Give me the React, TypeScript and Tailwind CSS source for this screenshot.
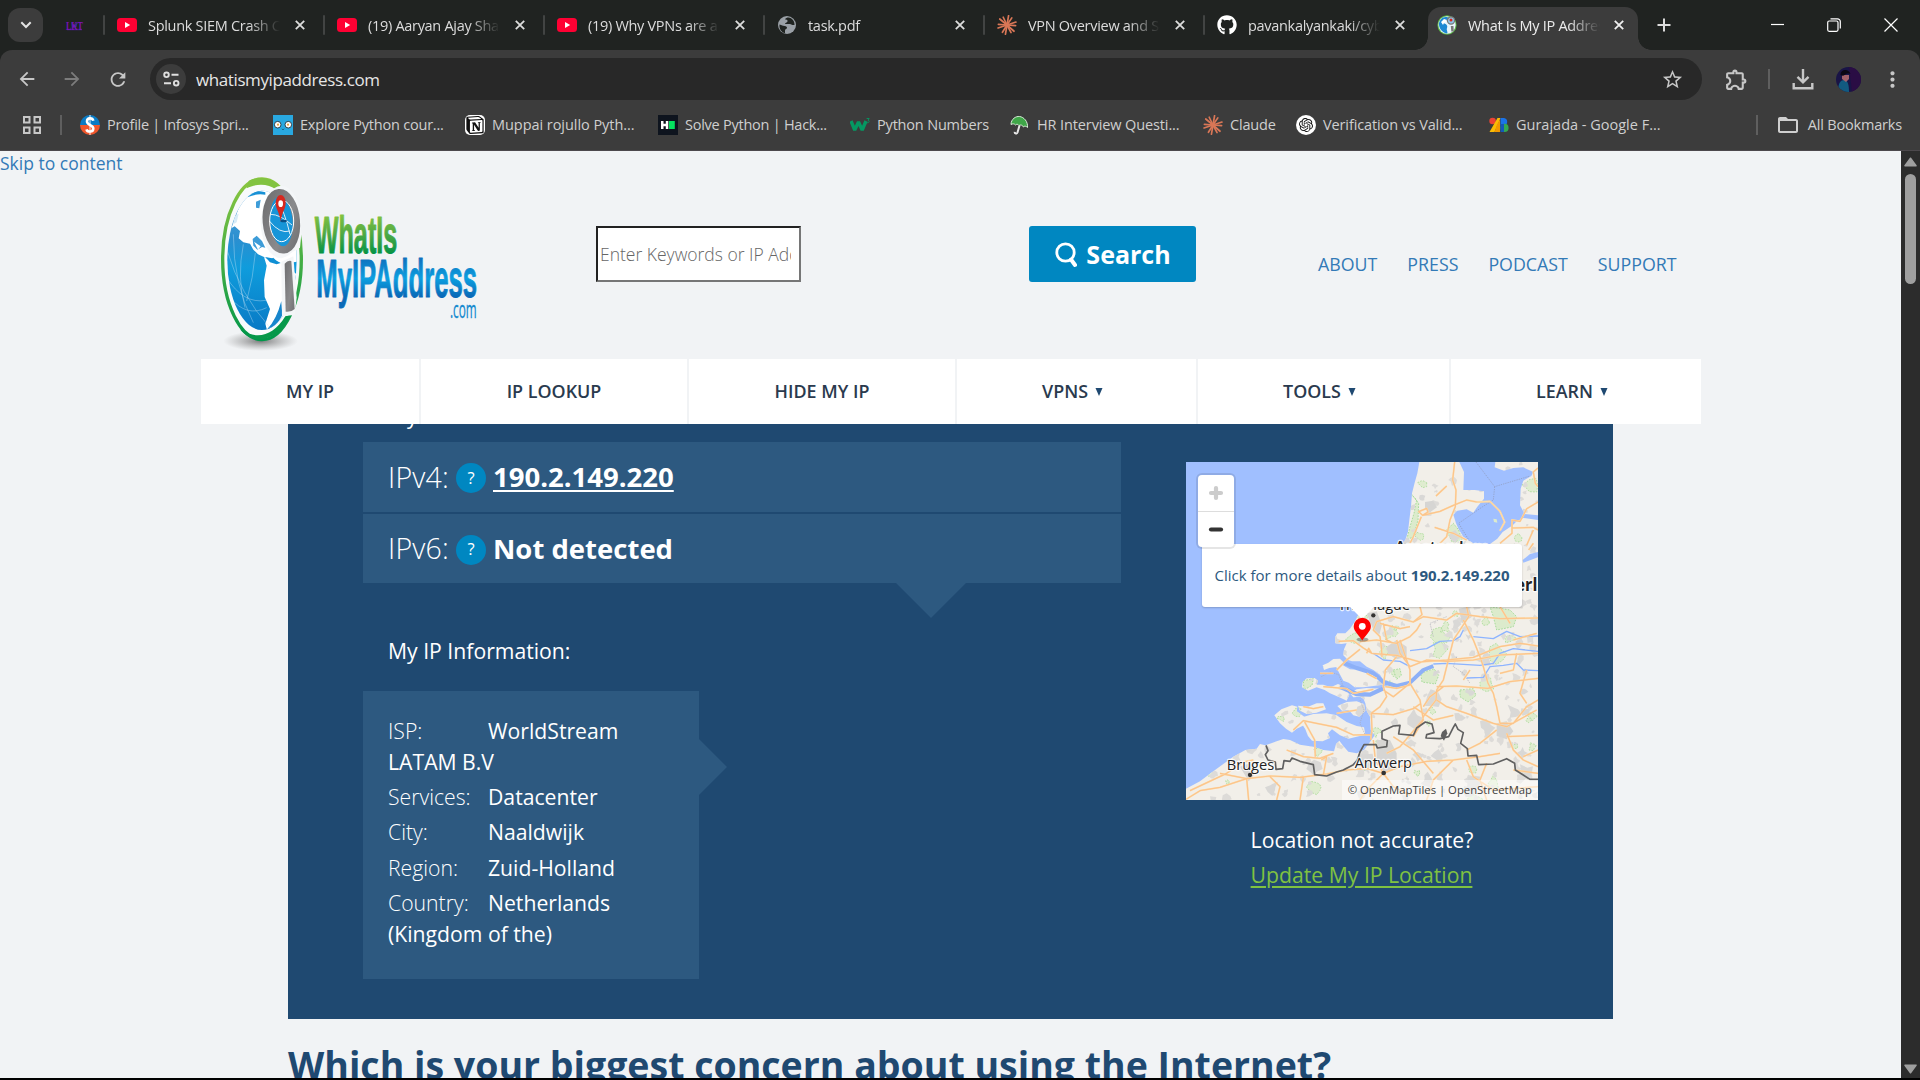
import React from "react";
import { FaGithub } from "react-icons/fa";
import { MdArrowBack, MdArrowForward, MdRefresh, MdStarBorder, MdOutlineExtension, MdFolderOpen, MdMoreVert } from "react-icons/md";
import { SiNotion, SiOpenai } from "react-icons/si";

/* ---------- favicons ---------- */

function YouTube() {
  return (
    <svg width="20" height="20" viewBox="0 0 20 20">
      <rect x="0" y="3" width="20" height="14" rx="3.5" fill="#ff0033" />
      <path d="M8 7l5.2 3L8 13z" fill="#fff" />
    </svg>
  );
}

function Spark() {
  const rays = [0, 30, 58, 88, 118, 150, 180, 208, 240, 268, 300, 330];
  return (
    <svg width="20" height="20" viewBox="-10 -10 20 20">
      {rays.map((r, i) => (
        <path key={r} d={i % 2 ? "M0 0L9.4 0.6" : "M0 0L8.6 -0.6"} stroke="#d97757" strokeWidth="1.7" strokeLinecap="round" transform={`rotate(${r + 8})`} />
      ))}
    </svg>
  );
}

function PlainGlobe() {
  return (
    <svg width="20" height="20" viewBox="0 0 20 20">
      <circle cx="10" cy="10" r="9" fill="#9aa0a6" />
      <path d="M2.5 9.5c2.500 .5 3 1.500 5 1.500s2.500 1 2.500 2-2 1-2 2.500v2.800C4.500 17.500 2 14 2.500 9.500zM8 4.500c1.500 0 3 .5 2.500 2S8 7.500 8 9h5c1 0 1.500 1 2.500 1h2c.3-4-2.500-7-6-7.500-1.500 0-3 .5-3.500 2z" fill="#202421" />
    </svg>
  );
}

function SiteGlobe() {
  return (
    <svg width="20" height="20" viewBox="0 0 20 20">
      <ellipse cx="10" cy="10" rx="9.6" ry="9.800" fill="#5cb646" />
      <ellipse cx="10" cy="10" rx="8.6" ry="8.800" fill="#e8f4fb" />
      <path d="M2 8c1-3 2-4 4-5.500C8 1.500 11 2 12 3l-1 3-3-.5-3 2c2 1 4 1 5 3 1 2-1 3 0 5 0 1 1 2 0 3C5 17.500 1.500 13 2 8z" fill="#1e88d2" />
      <path d="M4 7l3-3 3 1-1 2-2 1-1 2z" fill="#fff" />
      <circle cx="14" cy="5.500" r="3.600" fill="#8cc4ea" stroke="#777" strokeWidth="1.200" />
      <circle cx="14" cy="5" r="1.500" fill="#d9291c" />
      <path d="M13.800 11h2.600l.4 5.500h-2.500z" fill="#777" />
    </svg>
  );
}

function Infosys() {
  return (
    <svg width="20" height="20" viewBox="0 0 20 20">
      <path d="M0 10a10 10 0 0 1 20 0z" fill="#0a7bc4" />
      <path d="M0 10a10 10 0 0 0 20 0z" fill="#f0562b" />
      <path d="M13.300 5.800C12.500 2.500 7 2.500 7 6.500c0 4 6.300 3.200 6.300 7 0 4-6 3.800-6.800.8" fill="none" stroke="#fff" strokeWidth="2.600" />
      <path d="M10 0v20" stroke="#fff" strokeWidth=".9" />
    </svg>
  );
}

function Owl() {
  return (
    <svg width="20" height="20" viewBox="0 0 20 20">
      <rect width="20" height="20" fill="#29a8e0" />
      <circle cx="4.700" cy="9.700" r="3.300" fill="#fff" stroke="#23313b" strokeWidth=".9" />
      <circle cx="15.300" cy="9.700" r="3.300" fill="#fff" stroke="#23313b" strokeWidth=".9" />
      <circle cx="5" cy="9.700" r="1.100" fill="#e8a33d" />
      <circle cx="15" cy="9.700" r="1.100" fill="#e8a33d" />
      <path d="M9 13.800l1 1 1-1" stroke="#1c4c66" fill="none" />
    </svg>
  );
}

function Hacker() {
  return (
    <svg width="20" height="20" viewBox="0 0 20 20">
      <rect width="20" height="20" fill="#0e141e" />
      <path d="M3 6h2.500v2.700h2.300V6h2.500v8H7.800v-2.800H5.500V14H3z" fill="#fff" />
      <rect x="11" y="6" width="5.800" height="8" fill="#05e25f" />
    </svg>
  );
}

function W3() {
  return (
    <svg width="20" height="20" viewBox="0 0 20 20">
      <path d="M1 6l3.700 9L8.500 7l3.700 8L16 6" fill="none" stroke="#059862" strokeWidth="3.400" strokeLinejoin="bevel" />
      <path d="M16.600 3.500h2.600l-1.200 1.800c2 .2 1.500 3-1.600 2.300" fill="none" stroke="#059862" strokeWidth=".9" />
    </svg>
  );
}

function Umbrella() {
  return (
    <svg width="20" height="20" viewBox="0 0 20 20">
      <path d="M1 9.500C1 4 6 1 9.500 1.500c4.500.6 8.500 5 8 11-1.500-1.500-3-1.800-4-.5-1-2-3-2.500-4.500-1.500-1-1.500-2.500-1.500-3.500-.5-1-1.300-3-1.500-4.500-.5z" fill="#3fa648" stroke="#d9eed9" strokeWidth="1" />
      <path d="M9.500 10.500L7.500 17.500c-.6 1.600-3 1.200-2.800-.6" stroke="#e6e6e6" strokeWidth="2" fill="none" />
    </svg>
  );
}

function Translit() {
  return (
    <svg width="20" height="20" viewBox="0 0 20 20">
      <circle cx="3.600" cy="6" r="3.300" fill="#ea4335" />
      <path d="M8.500 3h3L5.500 17H.5z" fill="#fbbc04" />
      <path d="M8 9.500l3-5V17H5.500z" fill="#f29900" />
      <path d="M11.500 3h3.500a3.800 3.800 0 0 1 0 7.500h-3.500z" fill="#1a73e8" />
      <circle cx="15.500" cy="12.900" r="4.100" fill="#34a853" />
      <path d="M11.500 9h3.500v8h-3.500z" fill="#1558b8" />
    </svg>
  );
}

function Notion() {
  return (
    <span className="flex h-5 w-5 items-center justify-center rounded-[5px] bg-white">
      <SiNotion size={18} color="#111" />
    </span>
  );
}

function ChatGpt() {
  return (
    <span className="flex h-5 w-5 items-center justify-center rounded-full bg-white">
      <SiOpenai size={14} color="#111" />
    </span>
  );
}

function Close({ color = "#dcdcdc" }: { color?: string }) {
  return (
    <svg width="10" height="10" viewBox="0 0 10 10" className="shrink-0">
      <path d="M.8.8l8.400 8.400M9.200.8L.8 9.200" stroke={color} strokeWidth="1.800" />
    </svg>
  );
}

/* ---------- browser frame ---------- */

const tabs = [
  { icon: <YouTube />, title: "Splunk SIEM Crash Course" },
  { icon: <YouTube />, title: "(19) Aaryan Ajay Sharma" },
  { icon: <YouTube />, title: "(19) Why VPNs are a waste" },
  { icon: <PlainGlobe />, title: "task.pdf" },
  { icon: <Spark />, title: "VPN Overview and Sec" },
  { icon: <FaGithub size={20} color="#fff" />, title: "pavankalyankaki/cyber" },
];

function TabStrip() {
  return (
    <div className="flex h-[50px] shrink-0 items-end bg-[#202321]">
      <div className="mb-2 ml-2 flex h-[34px] w-[35px] items-center justify-center rounded-xl bg-[#3c3c3c]">
        <svg width="12" height="8" viewBox="0 0 12 8"><path d="M1.300 1.300L6 6l4.700-4.700" fill="none" stroke="#e3e3e3" strokeWidth="2" /></svg>
      </div>
      <svg width="17" height="14" viewBox="0 0 17 14" className="mb-[18px] ml-[23px] overflow-visible" fontFamily="'Liberation Serif', serif" fontWeight="700">
        <path d="M1 11.500h15" stroke="#3c1f80" strokeWidth="1.500" />
        <path d="M5 4l3.500 3 3-3-1 5-4.500 1z" fill="#27358f" />
        <text x="0" y="12" fontSize="13" fill="#7a12b8" textLength="17" lengthAdjust="spacingAndGlyphs">LKT</text>
      </svg>
      <div className="ml-[20px] flex h-[50px]">
        {tabs.map((t, i) => (
          <div key={i} className="flex h-[50px] w-[220px] items-center">
            <div className="h-5 w-[2px] rounded bg-[#424443]" />
            <div className="ml-[12px] flex w-5 justify-center">{t.icon}</div>
            <div className="ml-[11px] w-[132px] overflow-hidden whitespace-nowrap pt-[1px] text-[14.500px] text-[#dcdcdc] [mask-image:linear-gradient(to_right,black_76%,transparent)]"><span className="tracking-[-0.300px]">{t.title}</span></div>
            <div className="ml-[15px]"><Close /></div>
          </div>
        ))}
      </div>
      <div className="relative ml-[5px] flex h-[43px] w-[210px] items-center rounded-t-[13px] bg-[#3c3c3c]">
        <div className="absolute bottom-0 -left-[13px] h-[13px] w-[13px] bg-[radial-gradient(circle_at_0_0,#202321_12.500px,#3c3c3c_13px)]" />
        <div className="absolute -right-[13px] bottom-0 h-[13px] w-[13px] bg-[radial-gradient(circle_at_100%_0,#202321_12.500px,#3c3c3c_13px)]" />
        <div className="mb-[7px] ml-[9px] w-5"><SiteGlobe /></div>
        <div className="mb-[6px] ml-[11px] w-[132px] overflow-hidden whitespace-nowrap text-[14.500px] tracking-[-0.300px] text-[#ececec] [mask-image:linear-gradient(to_right,black_76%,transparent)]">What Is My IP Address</div>
        <div className="mb-[7px] ml-[14px]"><Close color="#f0f0f0" /></div>
      </div>
      <div className="ml-[19px] flex h-[50px] items-center">
        <svg width="14" height="14" viewBox="0 0 14 14"><path d="M7 .5v13M.5 7h13" stroke="#dcdcdc" strokeWidth="2" /></svg>
      </div>
      <div className="ml-auto mr-[22px] flex h-[50px] items-center gap-[43px] text-white">
        <svg width="13" height="13" viewBox="0 0 13 13"><path d="M0 5.500h13" stroke="#fff" strokeWidth="1.200" /></svg>
        <svg width="14" height="14" viewBox="0 0 14 14" fill="none" stroke="#fff" strokeWidth="1.200"><rect x=".7" y="3" width="10.300" height="10.300" rx="1.500" /><path d="M3.500.8h7a2.800 2.800 0 0 1 2.800 2.800v7" /></svg>
        <svg width="14" height="14" viewBox="0 0 14 14"><path d="M.5.5l13 13M13.500.5l-13 13" stroke="#fff" strokeWidth="1.200" /></svg>
      </div>
    </div>
  );
}

function Toolbar() {
  return (
    <div className="flex h-[58px] shrink-0 items-center rounded-t-xl bg-[#3c3c3c] text-[#c7c7c7]">
      <div className="ml-[16px] flex w-[22px] justify-center"><MdArrowBack size={22} /></div>
      <div className="ml-[23px] flex w-[22px] justify-center text-[#7c7c7c]"><MdArrowForward size={22} /></div>
      <div className="ml-[24px] flex w-[22px] justify-center"><MdRefresh size={23} /></div>
      <div className="ml-[21px] flex h-[42px] w-[1552px] items-center rounded-full bg-[#282828]">
        <div className="ml-[6px] flex h-[30px] w-[30px] items-center justify-center rounded-full bg-[#3c3c3c]">
          <svg width="17" height="16" viewBox="0 0 17 16" fill="none" stroke="#dedede" strokeWidth="1.900"><circle cx="3.500" cy="3.800" r="2.300" /><path d="M8.500 3.800h7M1 12.200h7" /><circle cx="13.200" cy="12.200" r="2.300" /></svg>
        </div>
        <div className="ml-[10px] pt-[1px] text-[17px] tracking-[-0.400px] text-[#e6e6e6]">whatismyipaddress.com</div>
        <MdStarBorder size={23} className="ml-auto mr-[18px]" />
      </div>
      <MdOutlineExtension size={25} className="ml-[22px]" />
      <div className="ml-[19px] h-5 w-[2px] bg-[#5f5f5f]" />
      <svg width="22" height="22" viewBox="0 0 22 22" fill="none" stroke="#c7c7c7" strokeWidth="2.400" className="ml-[22px]">
        <path d="M11 1v13M5.500 8.800l5.500 5.500 5.500-5.500M1.700 15v5.200h18.600V15" />
      </svg>
      <svg width="25" height="25" viewBox="0 0 25 25" className="ml-[22px] rounded-full">
        <rect width="25" height="25" fill="#191446" />
        <path d="M13 0h12v25h-9z" fill="#2a0d44" />
        <path d="M2 25c0-8 2-12 6-12s5 5 5 12z" fill="#125a80" />
        <path d="M6 8h7v4l-3 3-4-3z" fill="#a2606a" />
        <path d="M4.500 8c0-6 8-7 10-1-3-1-5 0-6 1s-2 1-4 0z" fill="#0b0714" />
      </svg>
      <MdMoreVert size={25} className="ml-[19px]" />
    </div>
  );
}

const bookmarks = [
  { w: "w-[193px] tracking-[-0.280px]", icon: <Infosys />, label: "Profile | Infosys Spri..." },
  { w: "w-[192px] tracking-[-0.200px]", icon: <Owl />, label: "Explore Python cour..." },
  { w: "w-[193px] tracking-[-0.050px]", icon: <Notion />, label: "Muppai rojullo Pyth..." },
  { w: "w-[192px] tracking-[-0.250px]", icon: <Hacker />, label: "Solve Python | Hack..." },
  { w: "w-[160px] tracking-[-0.180px]", icon: <W3 />, label: "Python Numbers" },
  { w: "w-[193px] tracking-[-0.120px]", icon: <Umbrella />, label: "HR Interview Questi..." },
  { w: "w-[93px] tracking-[-0.180px]", icon: <Spark />, label: "Claude" },
  { w: "w-[193px] tracking-[-0.120px]", icon: <ChatGpt />, label: "Verification vs Valid..." },
  { w: "w-[190px] tracking-[0px]", icon: <Translit />, label: "Gurajada - Google F..." },
];

function Bookmarks() {
  return (
    <div className="flex h-[43px] shrink-0 items-center border-b border-[#4c484c] bg-[#3c3c3c] pb-[9px] text-[14.500px] text-[#cfcfcf]">
      <svg width="18" height="18" viewBox="0 0 18 18" fill="none" stroke="#c7c7c7" strokeWidth="2" className="ml-[23px]">
        <rect x="1" y="1" width="5.500" height="5.500" /><rect x="11.500" y="1" width="5.500" height="5.500" /><rect x="1" y="11.500" width="5.500" height="5.500" /><rect x="11.500" y="11.500" width="5.500" height="5.500" />
      </svg>
      <div className="ml-[19px] mr-[18px] h-5 w-[2px] bg-[#5f5f5f]" />
      {bookmarks.map((b) => (
        <div key={b.label} className={`flex shrink-0 items-center gap-[7px] whitespace-nowrap ${b.w}`}>
          <span className="w-5 shrink-0">{b.icon}</span>
          <span>{b.label}</span>
        </div>
      ))}
      <div className="ml-auto h-5 w-[2px] bg-[#5f5f5f]" />
      <MdFolderOpen size={24} className="ml-[18px]" />
      <span className="ml-[8px] mr-[18px] whitespace-nowrap tracking-[-0.180px]">All Bookmarks</span>
    </div>
  );
}

/* ---------- site header ---------- */

function Logo() {
  return (
    <svg width="262" height="180" viewBox="84 72 786 540" className="shrink-0">
      <defs>
        <linearGradient id="lg-green" x1="0" y1="0" x2="0" y2="1"><stop offset="0.150" stopColor="#86c440" /><stop offset=".5" stopColor="#4fa944" /><stop offset="0.850" stopColor="#009245" /></linearGradient>
        <linearGradient id="lg-ring" x1="0" y1="0" x2="0" y2="1"><stop offset="0" stopColor="#8cc63f" /><stop offset="1" stopColor="#00974a" /></linearGradient>
        <linearGradient id="lg-blue" x1="0" y1="0" x2="0" y2="1"><stop offset="0.150" stopColor="#0f70bd" /><stop offset=".5" stopColor="#0c9fe0" /><stop offset="0.800" stopColor="#0a6ab8" /></linearGradient>
        <linearGradient id="lg-sea" x1="0" y1="0" x2="0" y2="1"><stop offset="0" stopColor="#5aa6da" /><stop offset=".35" stopColor="#2a8fd0" /><stop offset=".55" stopColor="#0f9cdc" /><stop offset="1" stopColor="#0878c4" /></linearGradient>
        <linearGradient id="lg-grey" x1="0" y1="0" x2="1" y2="1"><stop offset="0" stopColor="#6e6e70" /><stop offset=".6" stopColor="#8a8a8c" /><stop offset="1" stopColor="#707072" /></linearGradient>
        <radialGradient id="lg-shadow"><stop offset="0" stopColor="#555" stopOpacity=".75" /><stop offset="1" stopColor="#888" stopOpacity="0" /></radialGradient>
        <clipPath id="lg-globe"><ellipse cx="216" cy="328" rx="104" ry="209" /></clipPath>
      </defs>
      <ellipse cx="212" cy="570" rx="112" ry="30" fill="url(#lg-shadow)" />
      <ellipse cx="216" cy="325" rx="118" ry="241" fill="#f8fafb" stroke="url(#lg-ring)" strokeWidth="10" />
      <path d="M176 90C200 76 240 76 268 104L258 116C236 98 200 96 170 112z" fill="#82c341" />
      <path d="M150 535C190 585 260 575 306 490L286 496C250 556 200 568 150 535z" fill="#06984a" />
      <g clipPath="url(#lg-globe)">
        <rect x="105" y="115" width="230" height="430" fill="url(#lg-sea)" />
        <path d="M124 232L136 200 150 160 180 130 240 112 330 150 340 330 276 338 262 332 250 320 238 326 222 318 204 310 190 296 180 278 160 274 146 262 150 240 134 226z" fill="#fff" />
        <path d="M172 132Q196 114 226 124L226 131Q198 127 174 138z" fill="#1791d6" />
        <path d="M198 152l14-6-4 26-10-2zM188 264l12-10 16 16 10 20-10-2-14 8-12-12z" fill="#3d9cd8" />
        <path d="M132 196l14-8-6 26-10 6z" fill="#d7ebf7" />
        <path d="M192 272l20 14-8 10z" fill="#fff" />
        <path d="M222 318l20 12 34 6 20 16 40 30v160H232l-6-24 14-44-16-36-2-50 8-44z" fill="#fff" />
        <path d="M226 318l20 4 26 14-12 4-20-6z" fill="#0f8fd4" />
        <path d="M232 534Q260 505 274 450L277 492Q262 525 232 542z" fill="#1786cc" />
        <g fill="none" stroke="#cfe8f7" strokeWidth="1.600" opacity=".7">
          <path d="M112 300Q150 430 240 530M130 250Q130 400 190 515M160 280Q140 380 165 470M196 306Q190 380 170 450M110 380Q160 460 228 448M120 440Q170 500 230 470" />
        </g>
      </g>
      <path d="M212 200A62 112 0 0 0 276 322L330 290 334 250 330 200z" fill="#f6f8f9" />
      <ellipse cx="274" cy="212" rx="60" ry="108" fill="#f4f6f8" />
      <ellipse cx="274" cy="211" rx="45" ry="86" fill="#1795d8" stroke="url(#lg-grey)" strokeWidth="22" transform="rotate(-5 274 211)" />
      <path d="M242 190Q270 190 306 222M262 150Q284 180 300 250M238 210Q270 250 300 240" fill="none" stroke="#d8eefa" strokeWidth="3" />
      <ellipse cx="275" cy="210" rx="36" ry="62" fill="none" stroke="#fff" strokeWidth="3" />
      <ellipse cx="281" cy="210" rx="10" ry="4" fill="#0a4f86" />
      <path d="M272 212C268 180 257 175 257 156A15 24 0 0 1 287 156C287 175 276 180 272 212z" fill="#d7281f" />
      <ellipse cx="272" cy="158" rx="7" ry="10" fill="#fff" />
      <path d="M274 332L310 316 320 440 314 492 276 496z" fill="#f4f6f8" />
      <path d="M284 338Q294 326 304 330L314 474Q304 484 287 482z" fill="url(#lg-grey)" />
      <g fontFamily="'Liberation Sans', Arial, sans-serif" fontWeight="700" strokeLinejoin="round">
        <text x="374" y="305" fontSize="158" textLength="248" lengthAdjust="spacingAndGlyphs" fill="url(#lg-green)" stroke="url(#lg-green)" strokeWidth="3">WhatIs</text>
        <text x="379" y="438" fontSize="160" textLength="482" lengthAdjust="spacingAndGlyphs" fill="url(#lg-blue)" stroke="url(#lg-blue)" strokeWidth="3">MyIPAddress</text>
      </g>
      <text x="780" y="500" fontSize="72" fontFamily="'Open Sans', sans-serif" fontWeight="500" textLength="80" lengthAdjust="spacingAndGlyphs" fill="#1389cf" stroke="#1389cf" strokeWidth="1">.com</text>
    </svg>
  );
}

function SiteHeader() {
  return (
    <div className="flex h-[186px] shrink-0 items-start pl-[218px] pt-0.5">
      <Logo />
      <div className="ml-[116px] mt-[51px] flex h-[56px] w-[205px] items-center overflow-hidden border-2 border-b-[#767676] border-l-[#222] border-r-[#767676] border-t-[#222] bg-white pl-[2px]">
        <span className="block w-[191px] overflow-hidden whitespace-nowrap text-[17.500px] font-light text-[#666]">Enter Keywords or IP Address</span>
      </div>
      <button className="ml-[228px] mt-[51px] flex h-[56px] w-[167px] items-center justify-center gap-[9px] rounded-[3px] bg-[#0087c1] pl-[1px] pt-[1px] text-[25px] font-bold text-white">
        <svg width="22" height="26" viewBox="0 0 22 26" fill="none" stroke="#fff" strokeLinecap="round"><circle cx="10.500" cy="10.500" r="8.700" strokeWidth="2.800" /><path d="M16 17.500l4 5.500" strokeWidth="4" /></svg>
        Search
      </button>
      <div className="ml-[122px] mt-[76px] flex gap-[30px] text-[17.800px] font-medium leading-[26px] text-[#337ab7]">
        <span>ABOUT</span><span>PRESS</span><span>PODCAST</span><span>SUPPORT</span>
      </div>
    </div>
  );
}

const nav = [
  { w: "w-[218px]", label: "MY IP", menu: false },
  { w: "w-[266px]", label: "IP LOOKUP", menu: false },
  { w: "w-[266px]", label: "HIDE MY IP", menu: false },
  { w: "w-[239px]", label: "VPNS", menu: true },
  { w: "w-[251px]", label: "TOOLS", menu: true },
  { w: "w-[250px]", label: "LEARN", menu: true },
];

function Nav() {
  return (
    <div className="ml-[201px] flex h-[65px] shrink-0 gap-[2px] text-[17.900px] font-semibold text-[#2a3a4e]">
      {nav.map((n) => (
        <div key={n.label} className={n.menu ? `flex items-center justify-center gap-[7px] bg-white pr-[8px] ${n.w}` : `flex items-center justify-center bg-white ${n.w}`}>
          <span>{n.label}</span>
          {n.menu && <svg width="8" height="8" viewBox="0 0 8 8"><path d="M.5 0h7L4 8z" fill="#1f4971" /></svg>}
        </div>
      ))}
    </div>
  );
}

/* ---------- map ---------- */

const LAND =
  "M718 66L712 100 704 128 696 160 693 200 688 240 684 275 676 300 640 340 600 420 548 500 524 545 510 566 496 580 472 580 465 592 466 610 484 612 500 610 492 628 490 646 504 660 516 664 540 664 560 680 580 690 600 704 612 724 630 734 600 744 560 752 548 770 556 790 560 812 570 830 572 870 584 886 570 906 552 930 530 940 505 935 490 918 478 902 468 912 462 934 430 930 400 920 360 914 330 900 310 897 290 904 256 916 240 912 230 926 196 930 160 950 100 994 60 1024 18 1046V1080H1074V66z";

const ISLANDS = [
  "M428 676L445 668 460 657 480 656 492 668 476 680 448 684 432 690z",
  "M366 742L368 726 380 715 404 714 414 722 410 734 430 734 452 742 474 732 496 742 508 764 500 782 478 772 450 760 434 750 410 742 384 752z",
  "M466 676L486 674 510 688 540 690 560 692 584 702 604 716 608 734 580 738 550 742 524 742 506 728 490 722 478 700z",
  "M510 760L530 748 560 744 600 746 580 760 550 776 540 770 520 772z",
  "M354 797L384 800 410 790 430 790 438 808 410 818 380 822 360 812z",
  "M283 826L304 808 336 796 352 800 350 814 370 828 388 842 372 856 350 866 336 878 318 866 300 850z",
  "M372 830L400 822 440 820 470 826 500 846 530 858 552 862 556 884 530 890 506 896 480 886 456 868 444 880 450 894 428 904 396 902 384 888 376 868 366 852z",
  "M472 798L500 786 530 784 552 792 556 812 538 830 520 826 506 810 486 812z",
];

const LAKES = [
  "M838 66L852 96 850 150 884 150 912 154 912 176 892 200 880 218 860 208 832 212 820 224 828 250 836 268 850 290 880 310 930 312 952 296 968 276 998 256 1010 244 1030 234 1074 240V226L1034 222 1020 196 1022 146 1030 122 1054 108 1060 96 1030 82 1000 84 972 92 944 82 946 66z",
  "M1074 336L1050 342 1028 360 1030 368 1074 352z",
];

const ROADS = [
  "M824 66L818 120 828 150 826 200 810 240 800 290 780 310M724 230L700 290 690 310M716 215L740 205 744 216 728 226zM728 226L780 214 820 196 860 180 890 186M768 168L800 138M764 262L820 280 860 300",
  "M890 186L930 184 960 214 974 246 960 272M1074 84L1060 96 1066 130 1074 140M1074 186L1040 206 1028 230 1020 244 996 240 996 280 960 310M996 264L1060 262 1074 270M1060 270L1040 316M1060 310L1046 330",
  "M590 545L640 530 700 546 730 530 800 540 830 520 900 530 960 536 1074 534M720 500L726 524 700 546M600 550L660 566 690 560M590 545L580 570 600 590 604 620 606 650M610 550L620 600 634 606M476 604L520 602 550 624 575 640 650 646 720 666 800 660 880 652 960 620 1020 610 1074 618M540 605L590 600 650 610 690 590 710 570 722 550",
  "M860 500L866 530 840 570 820 600 810 640 790 720 770 750 768 780 730 830 728 840 660 920 620 940M850 540L880 600 900 650 910 680 924 730 940 760 950 800 960 850M650 600L660 640 690 680 740 660 800 664 880 660 960 645 1074 640M660 600L690 690 690 730 720 780 730 840 700 890",
  "M650 650L616 690 610 740 620 770 600 800 574 820 576 870 572 900M560 640L566 625 575 640M540 628L500 660 470 690M616 740L650 745 690 735M610 750L640 770 690 730M770 740L830 738 924 745 990 725 1074 715M770 780L800 800 860 820 940 850 980 860 1070 810M790 740L750 770 730 800M575 820L640 824 700 806 720 792",
  "M960 850L1000 850 1040 800 1074 780M950 870L900 910 860 930M980 880L1000 930 1030 960 1074 980M980 890L1074 886M610 1000L660 980 740 964 820 960 900 950 960 940M610 1000L640 1040 690 1066M610 1000L560 985 500 990 440 1002 360 1012 270 1008 200 1016 120 1000M610 1000L560 1050 540 1080M200 1016L206 1080M200 1016L120 1042 60 1052 18 1078M30 1052L140 1000 190 966 220 960M270 1010L300 1040 290 1080M370 1012L360 1080M580 900L586 960 610 1000",
  "M340 870L370 842 410 850 470 862 520 885 572 884M374 846L404 900 406 950M320 930L370 950 420 955 460 940M430 1005L440 950 424 960M740 1080L760 1020 820 960M860 960L880 1010 940 1050 1074 1040M920 970L900 1020 920 1080M1074 930L1030 950M460 700L420 700M430 740L500 746 520 760 580 748M370 800L400 806 430 800M470 820L530 810",
  "M1000 600L1070 580M990 550L960 500M1040 690L1020 760 1040 790M960 700L1000 690 1010 640M870 690L850 720M560 700L590 716M1000 990L1074 1000M640 890L700 930 760 1000M700 800L760 840 820 826",
];

const RIVERS =
  "M580 640L610 660 660 664 690 680 M690 632L740 626 780 604 820 602 840 590 850 570M760 672L800 670 900 676 940 670 960 640 1000 626 1074 634M860 714L910 712 930 680 970 676 1010 670 1030 690 1074 692M880 590L940 596 980 574 1020 590 1074 588";

function seeded(seed: number) {
  let s = seed;
  return () => {
    s = (s * 16807) % 2147483647;
    return s / 2147483647;
  };
}

function patches(seed: number, count: number, size: number) {
  const r = seeded(seed);
  let d = "";
  for (let i = 0; i < count; i++) {
    const x = 30 + r() * 1040;
    const y = 70 + r() * 1010;
    const k = size * (0.4 + r());
    const n = 8;
    for (let j = 0; j < n; j++) {
      const a = (j / n) * Math.PI * 2;
      const q = k * (0.35 + r() * 0.9);
      d += `${j ? "L" : "M"}${(x + Math.cos(a) * q).toFixed(0)} ${(y + Math.sin(a) * q).toFixed(0)}`;
    }
    d += "z";
  }
  return d;
}

const TOWNS = patches(77, 430, 11);
const BIG_TOWNS = patches(4021, 80, 20);
const WOODS = patches(913, 90, 20);

function MapTerrain() {
  return (
    <svg width="352" height="338" viewBox="18 66 1056 1014" preserveAspectRatio="none" className="block">
      <defs>
        <clipPath id="land-clip"><path d={LAND} />{ISLANDS.map((d) => <path key={d} d={d} />)}</clipPath>
      </defs>
      <rect x="18" y="66" width="1056" height="1014" fill="#a0bfff" />
      <path d={LAND} fill="#f2efe9" />
      {ISLANDS.map((d) => <path key={d} d={d} fill="#f2efe9" />)}
      <g clipPath="url(#land-clip)">
        <path d={WOODS} fill="#dfeccf" stroke="#b4dfa4" strokeWidth="3" strokeDasharray="5 4" />
        <path d="M692 160l18 20-8 40-12 40-10 40 20-10 14-50 2-50zM800 270l20-20 16 20 10 30-30 6zM930 500l60 10 20 20-10 30-50 10-10-40zM722 700l40-14 14 20-10 26-40-6zM840 750l40-4 8 20-24 20-24-16zM370 722l30-6-4 20-24 14zM640 690l20-4 4 20-14 12z" fill="#dcebcc" stroke="#a8dc9c" strokeWidth="3" strokeDasharray="5 4" />
        <path d={TOWNS} fill="#dddbd8" />
        <path d={BIG_TOWNS} fill="#d9d8d6" />
        <path d="M560 520l30-6 16 40-8 30-20-20zM620 620l30-20 30 20 0 30-30 8-26-16zM836 506l30-6 10 30-30 20zM590 900l40 0 20 40 0 40-40 20-20-40zM950 850l30-6 20 30-20 24-30-10zM735 186l24-4 12 20-20 14-16-10zM180 980l30-10 16 30-20 24z" fill="#d6d5d3" />
      </g>
      {LAKES.map((d) => <path key={d} d={d} fill="#a0bfff" />)}
      <path d="M940 236l10 2 2 10-10-2z" fill="#dcebcc" />
      <path d="M888 66L944 140 1050 108M944 140L940 180 908 200 836 250 870 306" fill="none" stroke="#8f98b8" strokeWidth="2" strokeDasharray="4 3" />
      <path d="M424 710L450 696 476 704 490 740M540 780L552 810 540 850 556 886M760 590L750 550 800 530M830 650L820 680 850 700 870 730" fill="none" stroke="#a9a9b5" strokeWidth="2" strokeDasharray="4 3" />
      <path d="M490 668L530 684 580 700 610 726 650 738 690 728 730 690 760 678" fill="none" stroke="#8db0f7" strokeWidth="12" strokeLinejoin="round" />
      <path d="M480 740L530 762 570 764 610 745" fill="none" stroke="#8db0f7" strokeWidth="13" />
      <path d={RIVERS} fill="none" stroke="#8db4ff" strokeWidth="4" strokeLinejoin="round" />
      <path d={ROADS.join("")} fill="none" stroke="#fde0b0" strokeWidth="5.500" strokeLinejoin="round" />
      <path d={ROADS.join("")} fill="none" stroke="#fcc48c" strokeWidth="3.600" strokeLinejoin="round" />
      <path d="M890 186L930 184 960 214 974 246 960 272" fill="none" stroke="#fde0b0" strokeWidth="3" />
      <path d="M258 916L264 932 256 944 264 960 286 966 288 988 308 986 312 962 330 964 336 954 360 964 400 974 404 1004 440 1008 470 996 490 990 520 974 532 960 540 936 552 914 588 914 592 924 620 920 622 902 606 896 606 874 640 858 660 856 656 882 700 886 710 864 736 846 756 852 762 878 740 884 738 894 780 896 806 890 820 862 826 852 834 868 850 878 842 910 862 926 864 948 890 946 896 974 940 972 980 956 1004 970 1006 990 1050 1018 1074 1018" fill="none" stroke="#606060" strokeWidth="5" strokeLinejoin="round" />
      <path d="M786 876l12-10 4 14-10 22-10-14z" fill="#606060" />
      <g fontFamily="'Open Sans', sans-serif" fill="#222" stroke="#fff" strokeOpacity=".8" strokeWidth="7" paintOrder="stroke" strokeLinejoin="round">
        <text x="644" y="340" fontSize="50" fontWeight="600" textLength="284" lengthAdjust="spacingAndGlyphs">Amsterdam</text>
        <text x="474" y="510" fontSize="44" textLength="216" lengthAdjust="spacingAndGlyphs">The Hague</text>
        <text x="886" y="454" fontSize="54" fontWeight="700" textLength="186" lengthAdjust="spacingAndGlyphs">Netherl</text>
        <text x="140" y="989" fontSize="44" textLength="143" lengthAdjust="spacingAndGlyphs">Bruges</text>
        <text x="524" y="985" fontSize="44" textLength="172" lengthAdjust="spacingAndGlyphs">Antwerp</text>
      </g>
      <circle cx="580" cy="526" r="6.500" fill="#333" />
      <circle cx="210" cy="1005" r="6.500" fill="#333" />
      <circle cx="611" cy="999" r="7" fill="#333" />
    </svg>
  );
}

function MapCard() {
  return (
    <div className="relative h-[338px] w-[352px] overflow-hidden">
      <MapTerrain />
      <div className="absolute left-[16px] top-[82px] h-[63px] w-[320px] rounded-[3px] bg-white shadow-[0_1px_2px_rgba(0,0,0,0.200)]">
        <div className="flex h-full items-center justify-center whitespace-nowrap text-[15px] text-[#2d5980]"><span>Click for more details about <b>190.2.149.220</b></span></div>
        <svg width="26" height="13" viewBox="0 0 26 13" className="absolute left-[147px] top-[62px]"><path d="M0 0h26L13 13z" fill="#fff" /></svg>
      </div>
      <svg width="24" height="26" viewBox="0 0 24 26" className="absolute left-[164px] top-[155px]">
        <ellipse cx="12.500" cy="22.500" rx="6" ry="2" fill="#555" opacity=".5" />
        <path d="M12.300 23.500C9 18 3.700 14.500 3.700 9.300a8.600 8.600 0 0 1 17.200 0c0 5.200-5.300 8.700-8.600 14.200z" fill="#f00" />
        <circle cx="12.300" cy="9.300" r="3.400" fill="#fff" />
      </svg>
      <div className="absolute left-[12px] top-[13px] h-[72px] w-[36px] rounded bg-white shadow-[0_0_0_2px_rgba(0,0,0,0.100)]">
        <svg width="36" height="72" viewBox="0 0 36 72" strokeLinecap="round">
          <path d="M18 13v10M13 18h10" stroke="#ccc" strokeWidth="4.200" />
          <path d="M0 36.500h36" stroke="#ddd" />
          <path d="M13 54.500h10" stroke="#333" strokeWidth="4.200" />
        </svg>
      </div>
      <div className="absolute bottom-0 right-0 flex h-5 items-center whitespace-nowrap bg-white/50 px-[6px] text-[11.300px] text-[#404040]">© OpenMapTiles | OpenStreetMap</div>
    </div>
  );
}

/* ---------- IP panel ---------- */

function IpRow({ label, value, link }: { label: string; value: string; link?: boolean }) {
  return (
    <div className={link ? "flex h-[70px] items-center bg-[#2d5980] pl-[25px] text-[27.500px] text-white" : "flex h-[69px] items-center bg-[#2d5980] pl-[25px] text-[27.500px] text-white"}>
      <span className="w-[68px] text-[28.500px] font-light tracking-[0.200px]">{label}</span>
      <span className="mt-[2px] flex h-[30px] w-[30px] items-center justify-center rounded-full bg-[#0087c1] text-[16.500px]">?</span>
      <span className={link ? "ml-[7px] font-bold underline decoration-2 underline-offset-[3px]" : "ml-[7px] font-bold"}>{value}</span>
    </div>
  );
}

const info: [string, string][] = [
  ["ISP:", "WorldStream LATAM B.V"],
  ["Services:", "Datacenter"],
  ["City:", "Naaldwijk"],
  ["Region:", "Zuid-Holland"],
  ["Country:", "Netherlands (Kingdom of the)"],
];

function Panel() {
  return (
    <div className="ml-[288px] flex h-[595px] w-[1325px] shrink-0 overflow-hidden bg-[#1f4971] pl-[75px] text-white">
      <div className="flex w-[758px] flex-col">
        <div className="h-[18px] overflow-hidden pl-[25px] text-[21px] leading-[28px]"><div className="-mt-[22px]">My IP Address is:</div></div>
        <div className="relative flex flex-col gap-[2px]">
          <IpRow label="IPv4:" value="190.2.149.220" link />
          <IpRow label="IPv6:" value="Not detected" />
          <svg width="70" height="35" viewBox="0 0 70 35" className="absolute left-[533px] top-[141px]"><path d="M0 0h70L35 35z" fill="#2d5980" /></svg>
        </div>
        <div className="mt-[52px] pl-[25px] text-[21.200px] leading-[32px]">My IP Information:</div>
        <div className="relative mt-[24px] h-[288px] w-[336px] bg-[#2d5980] py-[25px] pl-[25px] pr-[60px] text-[21.200px] leading-[30.700px]">
          {info.map(([k, v]) => (
            <div key={k} className="mb-[4.600px]">
              <span className="inline-block w-[100px] font-light">{k}</span>
              <span>{v}</span>
            </div>
          ))}
          <svg width="28" height="56" viewBox="0 0 28 56" className="absolute left-full top-[48px]"><path d="M0 0L28 28 0 56z" fill="#2d5980" /></svg>
        </div>
      </div>
      <div className="ml-[65px] mt-[38px] flex w-[352px] flex-col items-center">
        <MapCard />
        <div className="mt-[22px] text-[21.200px] leading-[35px]">
          <div>Location not accurate?</div>
          <div className="text-[#7fc241] underline decoration-2 underline-offset-[3px]">Update My IP Location</div>
        </div>
      </div>
    </div>
  );
}

function ScrollBar() {
  return (
    <div className="flex w-[19px] flex-col items-center bg-[#2c2c2c]">
      <svg width="13" height="10" viewBox="0 0 13 10" className="mt-[6px]"><path d="M6.500 1.200L12 8.800H1z" fill="#9f9f9f" stroke="#9f9f9f" strokeLinejoin="round" strokeWidth="1.500" /></svg>
      <div className="mt-[7px] h-[110px] w-[11px] rounded-full bg-[#9f9f9f]" />
      <svg width="13" height="10" viewBox="0 0 13 10" className="mb-[4px] mt-auto"><path d="M6.500 8.800L12 1.200H1z" fill="#9f9f9f" stroke="#9f9f9f" strokeLinejoin="round" strokeWidth="1.500" /></svg>
    </div>
  );
}

export default function App() {
  return (
    <div className="flex h-[1080px] w-[1920px] flex-col overflow-hidden border-b-2 border-black bg-[#202321] font-['Open_Sans','Noto_Sans',sans-serif]">
      <TabStrip />
      <Toolbar />
      <Bookmarks />
      <div className="flex min-h-0 flex-1">
        <div className="flex w-[1901px] flex-col overflow-hidden bg-[#f1f3f5]">
          <div className="h-[22px] shrink-0 text-[17.500px] leading-[25px] text-[#337ab7]">Skip to content</div>
          <SiteHeader />
          <Nav />
          <Panel />
          <h1 className="ml-[288px] mt-[19px] shrink-0 whitespace-nowrap text-[37.500px] font-bold leading-[54px] text-[#1f4971]">Which is your biggest concern about using the Internet?</h1>
        </div>
        <ScrollBar />
      </div>
    </div>
  );
}
